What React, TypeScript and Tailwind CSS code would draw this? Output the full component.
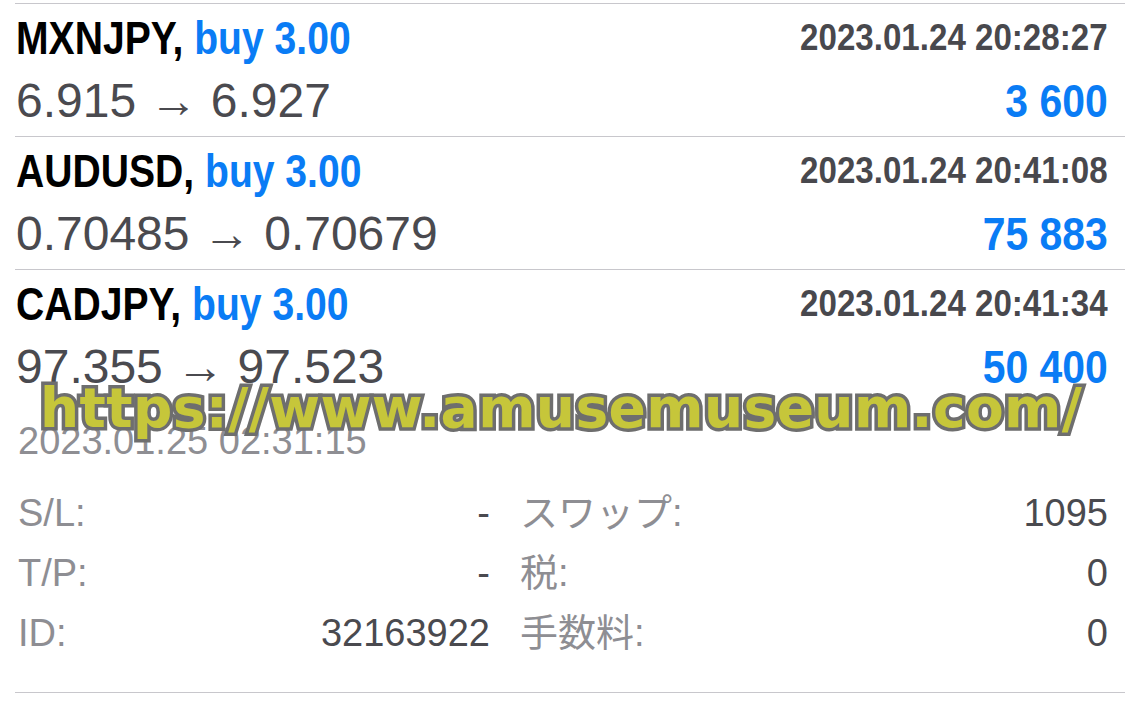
import React from "react";

type Trade = {
  sym: string;
  lot: string;
  time: string;
  from: string;
  to: string;
  profit: string;
};

const trades: Trade[] = [
  { sym: "MXNJPY,", lot: "buy 3.00", time: "2023.01.24 20:28:27", from: "6.915", to: "6.927", profit: "3 600" },
  { sym: "AUDUSD,", lot: "buy 3.00", time: "2023.01.24 20:41:08", from: "0.70485", to: "0.70679", profit: "75 883" },
  { sym: "CADJPY,", lot: "buy 3.00", time: "2023.01.24 20:41:34", from: "97.355", to: "97.523", profit: "50 400" },
];

const bold = "font-['Liberation_Sans',Arial,sans-serif] font-bold";

function Row({ t, last }: { t: Trade; last?: boolean }) {
  return (
    <div className={`border-t border-[#c8c7cc] pl-[1px] pr-[17px] pt-[9px] ${last ? "" : "pb-[10px]"}`}>
      <div className="flex items-center justify-between h-[50px]">
        <div className={`${bold} inline-block origin-left scale-x-[0.85] text-[46px] leading-[50px] whitespace-nowrap`}>
          <span className="text-black">{t.sym}</span>{" "}
          <span className="text-[#0a7cf5]">{t.lot}</span>
        </div>
        <div className={`${bold} inline-block origin-right scale-x-[0.895] text-[37px] leading-[50px] text-[#48484d] whitespace-nowrap`}>
          {t.time}
        </div>
      </div>
      <div className="flex items-baseline justify-between h-[50px] mt-[13px]">
        <div className="text-[48px] leading-[50px] text-[#4a4a4f] whitespace-nowrap">
          {t.from} → {t.to}
        </div>
        <div className={`${bold} inline-block origin-right scale-x-[0.87] text-[47px] leading-[50px] text-[#0a7cf5] whitespace-nowrap`}>
          {t.profit}
        </div>
      </div>
    </div>
  );
}

function Detail({ label, value }: { label: string; value: string }) {
  return (
    <div className="flex justify-between items-center h-[60px] text-[38px] leading-[60px] whitespace-nowrap">
      <span className="text-[#8e8e93]">{label}</span>
      <span className="text-[#4a4a4f]">{value}</span>
    </div>
  );
}

export default function App() {
  return (
    <div className="relative w-[1125px] h-[702px] overflow-hidden bg-white font-['Liberation_Sans','Noto_Sans_CJK_JP',sans-serif]">
      <div className="pt-[3px] pl-[15px]">
        {trades.map((t, i) => (
          <Row key={t.sym} t={t} last={i === trades.length - 1} />
        ))}
        <div className="pl-[3px] pr-[17px] border-b border-[#c8c7cc] pb-[29px]">
          <div className="mt-[27px] text-[38px] leading-[44px] text-[#8e8e93]">2023.01.25 02:31:15</div>
          <div className="mt-[20px] grid grid-cols-[472px_1fr] gap-x-[30px]">
            <Detail label="S/L:" value="-" />
            <Detail label="スワップ:" value="1095" />
            <Detail label="T/P:" value="-" />
            <Detail label="税:" value="0" />
            <Detail label="ID:" value="32163922" />
            <Detail label="手数料:" value="0" />
          </div>
        </div>
      </div>
      <div className="absolute left-[40px] top-[373px] font-['DejaVu_Sans',sans-serif] font-bold text-[55px] leading-[70px] text-[#c6c63a] whitespace-nowrap [-webkit-text-stroke:7px_#6e6e6e] [paint-order:stroke_fill] tracking-[0.4px]">
        https://www.amusemuseum.com/
      </div>
    </div>
  );
}
